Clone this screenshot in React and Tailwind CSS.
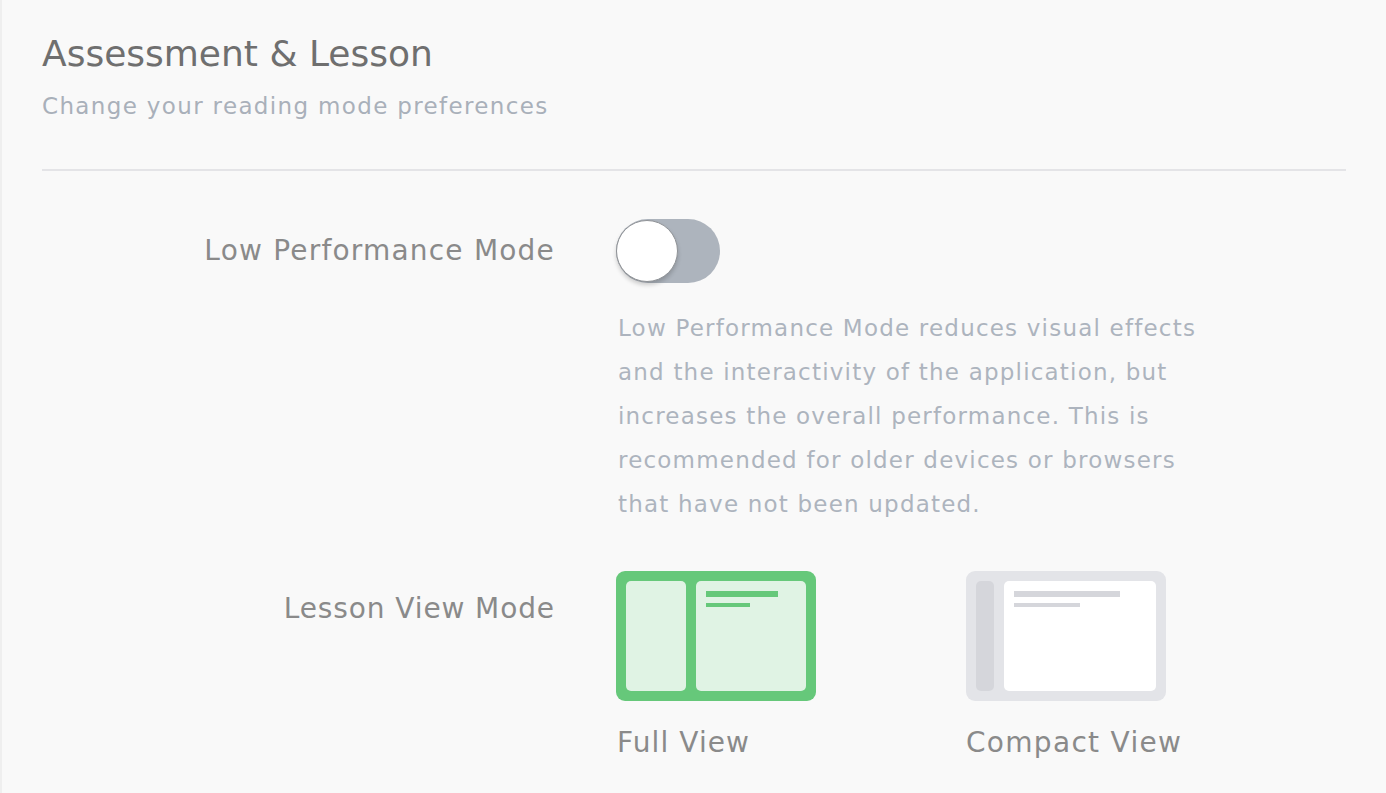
export default function App() {
  const font = { fontFamily: '"DejaVu Sans", sans-serif' };
  return (
    <div className="min-h-[793px] w-full bg-[#f9f9f9] border-l-2 border-[#efefef]" style={font}>
      <div className="pl-[40px] pr-[40px] pt-[30px]">
        <h1 className="text-[36px] leading-[48px] text-[#6f6f6f] font-normal">Assessment &amp; Lesson</h1>
        <p className="mt-[12px] text-[23px] leading-[32px] tracking-[1.35px] text-[#a9b0ba]">Change your reading mode preferences</p>
        <div className="mt-[47px] h-[2px] bg-[#e4e4e7]" />
      </div>
      <div className="mt-[48px] grid grid-cols-[553px_1fr] gap-x-[61px]">
        <div className="text-right text-[28px] leading-[64px] tracking-[1.2px] text-[#8a8a8a]">Low Performance Mode</div>
        <div>
          <div className="relative h-[64px] w-[104px] rounded-full bg-[#adb4bd]">
            <div className="absolute left-0 top-[1px] h-[62px] w-[62px] rounded-full bg-white border border-[#8f9296] shadow-[0_3px_4px_rgba(0,0,0,0.18)]" />
          </div>
          <p className="mt-[23px] pl-[2px] text-[23px] leading-[44px] tracking-[1.2px] text-[#adb4be]">
            <span className="block">Low Performance Mode reduces visual effects</span>
            <span className="block">and the interactivity of the application, but</span>
            <span className="block">increases the overall performance. This is</span>
            <span className="block">recommended for older devices or browsers</span>
            <span className="block">that have not been updated.</span>
          </p>
        </div>
        <div className="mt-[51px] text-right text-[28px] leading-[64px] tracking-[0.9px] text-[#8a8a8a]">Lesson View Mode</div>
        <div className="mt-[45px] flex gap-[150px]">
          <div className="flex flex-col">
            <div className="flex h-[130px] w-[200px] gap-[10px] rounded-[9px] bg-[#66c87a] p-[10px]">
              <div className="w-[60px] rounded-[5px] bg-[#e0f3e4]" />
              <div className="flex-1 rounded-[5px] bg-[#e0f3e4] p-[10px]">
                <div className="h-[6px] w-[72px] bg-[#66c87a]" />
                <div className="mt-[6px] h-[4px] w-[44px] bg-[#66c87a]" />
              </div>
            </div>
            <div className="mt-[22px] pl-[1px] text-[28px] leading-[40px] tracking-[1.1px] text-[#8a8a8a]">Full View</div>
          </div>
          <div className="flex flex-col">
            <div className="flex h-[130px] w-[200px] gap-[10px] rounded-[9px] bg-[#e3e4e8] p-[10px]">
              <div className="w-[18px] rounded-[5px] bg-[#d5d6db]" />
              <div className="flex-1 rounded-[5px] bg-white p-[10px]">
                <div className="h-[6px] w-[106px] bg-[#d5d6db]" />
                <div className="mt-[6px] h-[4px] w-[66px] bg-[#d5d6db]" />
              </div>
            </div>
            <div className="mt-[22px] text-[28px] leading-[40px] tracking-[1.3px] text-[#8a8a8a]">Compact View</div>
          </div>
        </div>
      </div>
    </div>
  );
}
